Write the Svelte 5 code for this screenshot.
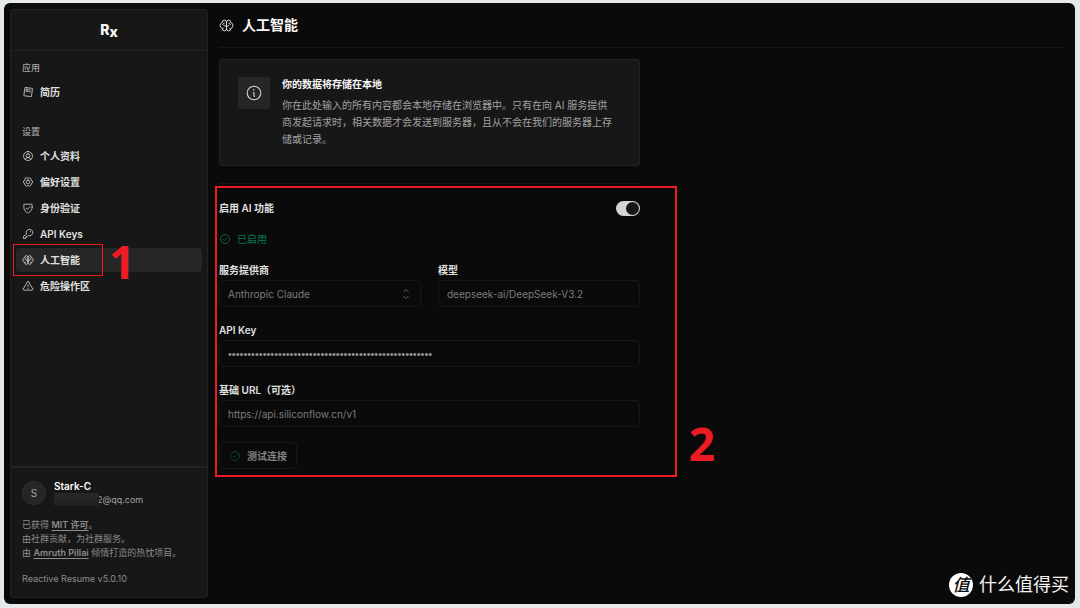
<script lang="ts">
  interface NavItem {
    label: string;
    icon: string;
    active?: boolean;
  }

  interface NavGroup {
    title: string;
    items: NavItem[];
  }

  const groups: NavGroup[] = [
    { title: "应用", items: [{ label: "简历", icon: "resume" }] },
    {
      title: "设置",
      items: [
        { label: "个人资料", icon: "user" },
        { label: "偏好设置", icon: "gear" },
        { label: "身份验证", icon: "shield" },
        { label: "API Keys", icon: "key" },
        { label: "人工智能", icon: "brain", active: true },
        { label: "危险操作区", icon: "warning" },
      ],
    },
  ];

  // Stroke paths on a 256 grid
  const icons: Record<string, string[]> = {
    resume: [
      "M72 32L216 50a8 8 0 0 1 7 9L202 219a8 8 0 0 1-9 7L46 208a8 8 0 0 1-7-9L63 39a8 8 0 0 1 9-7Z",
      "M92 72L85 114L124 119L130 77Z",
      "M156 84L184 88",
      "M148 124L178 128",
    ],
    user: [
      "M128 32a96 96 0 1 0 0 192a96 96 0 1 0 0-192Z",
      "M128 80a40 40 0 1 0 0 80a40 40 0 1 0 0-80Z",
      "M64 199a72 72 0 0 1 128 0",
    ],
    gear: [
      "M128 88a40 40 0 1 0 0 80a40 40 0 1 0 0-80Z",
      "M101 37L128 52L155 37L194 60L196 91L222 106V150L196 165L194 196L155 219L128 204L101 219L62 196L60 165L34 150V106L60 91L62 60Z",
    ],
    shield: [
      "M216 112V56a8 8 0 0 0-8-8H48a8 8 0 0 0-8 8v56c0 96 88 120 88 120s88-24 88-120Z",
      "M88 132L112 156L172 100",
    ],
    key: [
      "M94 122A70 70 0 1 1 134 162L120 176H96v24H72v24H32V184Z",
      "M180 70v12",
    ],
    brain: [
      "M128 72a36 36 0 0 0-72 0v6a52 52 0 0 0 0 100v6a36 36 0 0 0 72 0Z",
      "M128 72a36 36 0 0 1 72 0v6a52 52 0 0 1 0 100v6a36 36 0 0 1-72 0Z",
      "M128 150a40 40 0 0 0-40-22",
      "M128 150a40 40 0 0 1 40-22",
      "M88 84a28 28 0 0 1-26 28",
      "M168 84a28 28 0 0 0 26 28",
      "M66 176h8",
      "M182 176h8",
    ],
    warning: [
      "M142 40L230 192a16 16 0 0 1-14 24H40a16 16 0 0 1-14-24L114 40a16 16 0 0 1 28 0Z",
      "M128 104v40",
      "M128 176v6",
    ],
    info: [
      "M128 32a96 96 0 1 0 0 192a96 96 0 1 0 0-192Z",
      "M120 120a8 8 0 0 1 8 8v40a8 8 0 0 0 8 8",
      "M124 80v8",
    ],
    check: [
      "M128 32a96 96 0 1 0 0 192a96 96 0 1 0 0-192Z",
      "M88 136L112 160L168 104",
    ],
    caret: ["M80 176L128 224L176 176", "M80 80L128 32L176 80"],
  };

  let enabled = $state(true);
  let provider = $state("anthropic");
  let model = $state("deepseek-ai/DeepSeek-V3.2");
  let apiKey = $state("x".repeat(53));
  let baseUrl = $state("https://api.siliconflow.cn/v1");
</script>

{#snippet icon(name: string)}
  <svg class="icon" viewBox="0 0 256 256" aria-hidden="true">
    {#each icons[name] as d}
      <path {d} />
    {/each}
  </svg>
{/snippet}

<div class="backdrop">
  <div class="window">
    <aside class="sidebar">
      <a class="logo" href="#home" aria-label="Reactive Resume">R<span>x</span></a>

      <nav>
        {#each groups as group}
          <section class="group">
            <h2>{group.title}</h2>
            {#each group.items as item}
              <a class="nav-item" class:active={item.active} href="#nav">
                {@render icon(item.icon)}
                {item.label}
                {#if item.active}
                  <span class="mark mark-nav"></span>
                  <span class="mark-number number-nav">1</span>
                {/if}
              </a>
            {/each}
          </section>
        {/each}
      </nav>

      <footer>
        <div class="account">
          <span class="avatar">S</span>
          <div class="who">
            <strong>Stark-C</strong>
            <span class="email"><span class="redacted"></span>2@qq.com</span>
          </div>
        </div>
        <div class="legal">
          <p>已获得 <a href="#license">MIT 许可</a>。</p>
          <p>由社群贡献，为社群服务。</p>
          <p>由 <a href="#author">Amruth Pillai</a> 倾情打造的热忱项目。</p>
        </div>
        <p class="version">Reactive Resume v5.0.10</p>
      </footer>
    </aside>

    <main>
      <header>
        {@render icon("brain")}
        <h1>人工智能</h1>
      </header>

      <div class="content">
        <section class="notice">
          <div class="notice-icon">{@render icon("info")}</div>
          <div>
            <h3>你的数据将存储在本地</h3>
            <p>
              你在此处输入的所有内容都会本地存储在浏览器中。只有在向 AI 服务提供商发起请求时，相关数据才会发送到服务器，且从不会在我们的服务器上存储或记录。
            </p>
          </div>
        </section>

        <hr />

        <form class="settings">
          <div class="toggle-row">
            <label for="enable-ai">启用 AI 功能</label>
            <input id="enable-ai" class="switch" type="checkbox" role="switch" bind:checked={enabled} />
          </div>

          <p class="status">{@render icon("check")}已启用</p>

          <div class="columns">
            <div class="field">
              <label for="provider">服务提供商</label>
              <div class="select-wrap">
                <select id="provider" bind:value={provider}>
                  <option value="anthropic">Anthropic Claude</option>
                </select>
                {@render icon("caret")}
              </div>
            </div>
            <div class="field">
              <label for="model">模型</label>
              <input id="model" type="text" bind:value={model} />
            </div>
          </div>

          <div class="field">
            <label for="api-key">API Key</label>
            <input id="api-key" class="secret" type="password" autocomplete="off" bind:value={apiKey} />
          </div>

          <div class="field">
            <label for="base-url">基础 URL（可选）</label>
            <input id="base-url" type="text" bind:value={baseUrl} />
          </div>

          <button type="button">{@render icon("check")}测试连接</button>

          <span class="mark mark-form"></span>
          <span class="mark-number number-form">2</span>
        </form>
      </div>
    </main>

    <div class="watermark">
      <span class="seal">值</span>
      什么值得买
    </div>
  </div>
</div>

<style>
  :global(body) {
    background: #e6e9eb;
  }

  .backdrop {
    --border: #232323;
    --red: #ed1c24;
    box-sizing: border-box;
    min-height: 100vh;
    padding: 3px 5px 4px 4px;
    display: flex;
    font-family: Inter, "Noto Sans CJK SC", sans-serif;
    font-size: 10px;
    line-height: 16px;
    color: #e0e0e0;
  }

  .backdrop * {
    box-sizing: border-box;
  }

  h1, h2, h3, p {
    margin: 0;
  }

  a {
    color: inherit;
  }

  .window {
    position: relative;
    flex: 1;
    display: flex;
    gap: 11px;
    padding: 6px 12px 6px 6px;
    background: #0a0a0a;
    border-radius: 6px;
  }

  .icon {
    flex: none;
    width: 12px;
    height: 12px;
    fill: none;
    stroke: currentColor;
    stroke-width: 16;
    stroke-linecap: round;
    stroke-linejoin: round;
  }

  .sidebar {
    flex: none;
    width: 198px;
    display: flex;
    flex-direction: column;
    background: #171717;
    border: 1px solid var(--border);
    border-radius: 4px;
  }

  .logo {
    height: 41px;
    display: flex;
    align-items: center;
    justify-content: center;
    border-bottom: 1px solid var(--border);
    color: #fafafa;
    font-size: 14px;
    font-weight: 800;
    text-decoration: none;
  }

  .logo span {
    padding-top: 4px;
  }

  nav {
    flex: 1;
    padding: 9px 5px;
    display: flex;
    flex-direction: column;
    gap: 20px;
  }

  .group {
    display: flex;
    flex-direction: column;
    gap: 2px;
  }

  h2 {
    padding: 0 6px;
    font-size: 9px;
    font-weight: 500;
    color: #a3a3a3;
  }

  .group h2 {
    margin-bottom: 2px;
  }

  .nav-item {
    position: relative;
    height: 24px;
    padding: 0 6px;
    display: flex;
    align-items: center;
    gap: 6px;
    border-radius: 4px;
    font-weight: 600;
    text-decoration: none;
  }

  .nav-item.active {
    background: #262626;
  }

  .mark {
    position: absolute;
    border: 2px solid var(--red);
    pointer-events: none;
  }

  .mark-number {
    position: absolute;
    color: var(--red);
    font-family: "Noto Sans", sans-serif;
    font-size: 46px;
    line-height: 46px;
    font-weight: 700;
  }

  .mark-nav {
    top: -4px;
    left: -3px;
    width: 90px;
    height: 32px;
    border-width: 1px;
  }

  .number-nav {
    top: -10px;
    left: 93px;
  }

  footer {
    padding: 12px 11px 11px;
    border-top: 2px solid var(--border);
    color: #8c8c8c;
    font-size: 9px;
    line-height: 14px;
  }

  .account {
    display: flex;
    align-items: center;
    gap: 8px;
  }

  .avatar {
    width: 24px;
    height: 24px;
    display: flex;
    align-items: center;
    justify-content: center;
    background: #262626;
    border: 1px solid #303030;
    border-radius: 50%;
    color: #a3a3a3;
    font-size: 10px;
  }

  .who {
    display: flex;
    flex-direction: column;
    line-height: 13px;
  }

  .who strong {
    color: #fafafa;
    font-size: 10px;
    font-weight: 600;
  }

  .email {
    display: flex;
    color: #a3a3a3;
  }

  .redacted {
    width: 45px;
    margin-right: -2px;
    background: linear-gradient(#282828, #1f1f1f);
    z-index: 1;
  }

  .legal {
    margin-top: 12px;
  }

  .legal a {
    font-weight: 600;
    text-underline-offset: 2px;
  }

  .version {
    margin-top: 12px;
  }

  main {
    flex: 1;
    min-width: 0;
  }

  header {
    height: 39px;
    padding-bottom: 6px;
    display: flex;
    align-items: center;
    gap: 8px;
    border-bottom: 1px solid #171717;
  }

  header .icon {
    width: 15px;
    height: 15px;
  }

  h1 {
    font-size: 14px;
    font-weight: 600;
    color: #fafafa;
  }

  .content {
    max-width: 421px;
    padding-top: 11px;
  }

  .notice {
    display: flex;
    gap: 12px;
    padding: 17px 25px 17px 18px;
    background: #171717;
    border: 1px solid var(--border);
    border-radius: 3px;
  }

  .notice-icon {
    flex: none;
    width: 32px;
    height: 32px;
    display: flex;
    align-items: center;
    justify-content: center;
    background: #262626;
    border-radius: 2px;
    color: #d4d4d4;
  }

  .notice-icon .icon {
    width: 18px;
    height: 18px;
  }

  h3 {
    margin-bottom: 6px;
    font-size: 10px;
    line-height: 14px;
    font-weight: 700;
    color: #fafafa;
  }

  .notice p {
    color: #a3a3a3;
    line-height: 17px;
  }

  hr {
    margin: 17px 0 16px;
    border: 0;
    border-top: 1px solid #171717;
  }

  .settings {
    position: relative;
    display: flex;
    flex-direction: column;
    gap: 15px;
  }

  label {
    font-weight: 600;
  }

  .toggle-row {
    display: flex;
    align-items: center;
    justify-content: space-between;
  }

  .switch {
    appearance: none;
    width: 24px;
    height: 15px;
    margin: 0;
    padding: 1px;
    display: flex;
    justify-content: flex-start;
    background: #404040;
    border-radius: 8px;
  }

  .switch:checked {
    justify-content: flex-end;
    background: #d4d4d4;
  }

  .switch::before {
    content: "";
    width: 13px;
    height: 13px;
    background: #171717;
    border-radius: 50%;
  }

  .status {
    display: flex;
    align-items: center;
    gap: 6px;
    color: #097a4b;
  }

  .columns {
    display: grid;
    grid-template-columns: 1fr 1fr;
    gap: 17px;
  }

  .field {
    display: flex;
    flex-direction: column;
    gap: 2px;
  }

  .field input,
  select {
    width: 100%;
    height: 27px;
    margin: 0;
    padding: 0 8px;
    appearance: none;
    background: transparent;
    border: 1px solid #171717;
    border-radius: 4px;
    color: #7c7c7c;
    font: inherit;
  }

  .field .secret {
    color: #969696;
    font-family: "Liberation Sans", sans-serif;
    font-size: 11px;
  }

  .select-wrap {
    display: grid;
    align-items: center;
  }

  .select-wrap select,
  .select-wrap .icon {
    grid-area: 1 / 1;
  }

  .select-wrap .icon {
    justify-self: end;
    margin-right: 9px;
    color: #7c7c7c;
    pointer-events: none;
  }

  button {
    align-self: flex-start;
    height: 27px;
    padding: 0 9px;
    display: flex;
    align-items: center;
    gap: 6px;
    background: transparent;
    border: 1px solid #171717;
    border-radius: 4px;
    color: #828282;
    font: inherit;
    font-weight: 600;
  }

  button .icon {
    color: #085636;
  }

  .mark-form {
    inset: -14px -37px -8px -4px;
  }

  .number-form {
    right: -75px;
    bottom: 3px;
  }

  .watermark {
    position: absolute;
    right: 6px;
    bottom: 6px;
    display: flex;
    align-items: center;
    gap: 6px;
    color: #f5f5f5;
    font-size: 18px;
    line-height: 26px;
  }

  .seal {
    width: 24px;
    height: 24px;
    display: flex;
    align-items: center;
    justify-content: center;
    background: #fff;
    border-radius: 50%;
    color: #0a0a0a;
    font-size: 17px;
    font-style: italic;
    font-weight: 500;
  }
</style>
